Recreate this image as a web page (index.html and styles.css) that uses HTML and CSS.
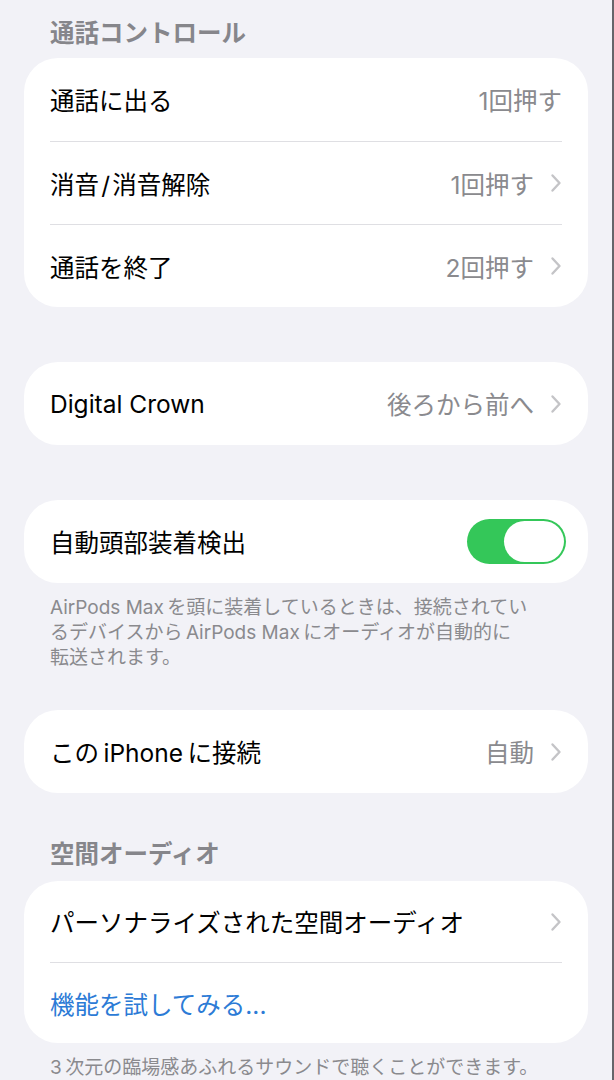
FILE: index.html
```html
<!DOCTYPE html>
<html lang="ja">
<head>
  <meta charset="utf-8">
  <title>AirPods Max</title>
  <link rel="stylesheet" href="styles.css">
</head>
<body>
  <div class="page">
    <h2 class="section-title">通話コントロール</h2>
    <div class="group">
      <div class="row">
        <span class="label">通話に出る</span>
        <span class="value">1回押す</span>
      </div>
      <div class="row">
        <span class="label">消音&#8202;/&#8202;消音解除</span>
        <span class="value">1回押す</span>
        <svg class="chevron" viewBox="0 0 12 20"><path d="M2.5 2.5 L9.5 10 L2.5 17.5"/></svg>
      </div>
      <div class="row">
        <span class="label">通話を終了</span>
        <span class="value">2回押す</span>
        <svg class="chevron" viewBox="0 0 12 20"><path d="M2.5 2.5 L9.5 10 L2.5 17.5"/></svg>
      </div>
    </div>

    <div class="group spaced">
      <div class="row">
        <span class="label">Digital Crown</span>
        <span class="value">後ろから前へ</span>
        <svg class="chevron" viewBox="0 0 12 20"><path d="M2.5 2.5 L9.5 10 L2.5 17.5"/></svg>
      </div>
    </div>

    <div class="group spaced">
      <div class="row">
        <span class="label">自動頭部装着検出</span>
        <span class="toggle on"><span class="knob"></span></span>
      </div>
    </div>
    <p class="footnote">AirPods&nbsp;Max&#8201;を頭に装着しているときは、接続されてい<br>るデバイスから&#8201;AirPods&nbsp;Max&#8201;にオーディオが自動的に<br>転送されます。</p>

    <div class="group spaced-small">
      <div class="row">
        <span class="label">この&#8201;iPhone&#8201;に接続</span>
        <span class="value">自動</span>
        <svg class="chevron" viewBox="0 0 12 20"><path d="M2.5 2.5 L9.5 10 L2.5 17.5"/></svg>
      </div>
    </div>

    <h2 class="section-title spaced-title">空間オーディオ</h2>
    <div class="group compact">
      <div class="row">
        <span class="label">パーソナライズされた空間オーディオ</span>
        <svg class="chevron" viewBox="0 0 12 20"><path d="M2.5 2.5 L9.5 10 L2.5 17.5"/></svg>
      </div>
      <div class="row">
        <span class="label link">機能を試してみる...</span>
      </div>
    </div>
    <p class="footnote">3&#8201;次元の臨場感あふれるサウンドで聴くことができます。</p>
  </div>
</body>
</html>
```

FILE: styles.css
```css
html, body {
  margin: 0;
  padding: 0;
}

body {
  background: #f2f2f7;
  font-family: "Inter", "Noto Sans CJK JP", sans-serif;
  color: #000;
  width: 614px;
  height: 1080px;
  overflow: hidden;
}

.page {
  box-sizing: border-box;
  height: 1080px;
  padding: 19px 24px 0 24px;
  border-right: 2px solid #66666a;
}

.section-title {
  margin: 0 0 11px 26px;
  font-size: 24.5px;
  line-height: 28px;
  font-weight: 600;
  color: #86868b;
}

.spaced-title {
  margin-top: 47px;
  margin-bottom: 13px;
}

.group {
  background: #fff;
  border-radius: 34px;
  overflow: hidden;
}

.group.spaced {
  margin-top: 55px;
}

.group.spaced-small {
  margin-top: 40px;
}

.row {
  display: flex;
  align-items: center;
  height: 83px;
  margin: 0 26px;
  font-size: 24.5px;
}

.row + .row {
  height: 82px;
  border-top: 1px solid #dfdfe3;
}

.group.compact .row {
  height: 81px;
}

.group.compact .row + .row {
  height: 80px;
}

.label {
  flex: 1;
  white-space: nowrap;
}

.link {
  color: #2c7bd6;
}

.value {
  color: #8a8a8e;
}

.chevron {
  width: 12px;
  height: 20px;
  margin-left: 16px;
  fill: none;
  stroke: #c4c4c7;
  stroke-width: 2.4;
  stroke-linecap: round;
  stroke-linejoin: round;
}

.toggle {
  position: relative;
  width: 99px;
  height: 45px;
  margin-right: -4px;
  border-radius: 23px;
  background: #34c759;
}

.toggle .knob {
  position: absolute;
  top: 2px;
  right: 2px;
  width: 60px;
  height: 41px;
  border-radius: 21px;
  background: #fff;
}

.footnote {
  margin: 12px 26px 0 26px;
  font-size: 19px;
  line-height: 25px;
  color: #8a8a8e;
  white-space: nowrap;
}
```
